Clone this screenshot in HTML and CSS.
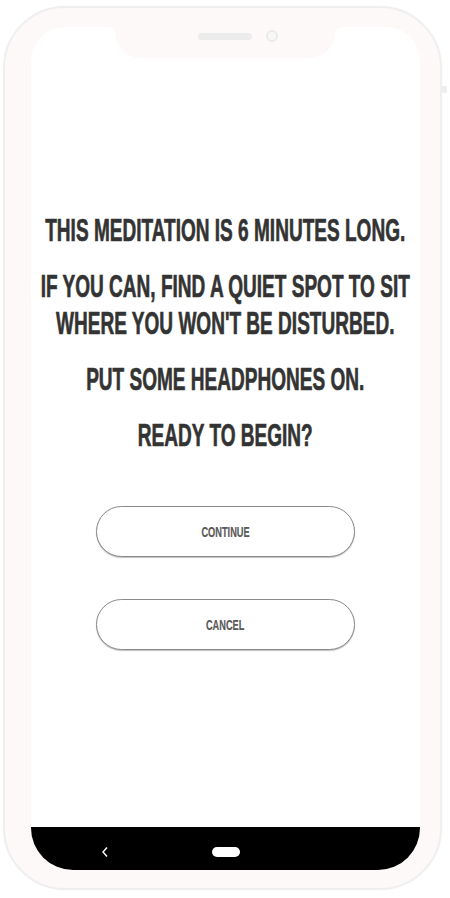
FILE: index.html
```html
<!DOCTYPE html>
<html lang="en">
<head>
<meta charset="utf-8">
<title>Meditation</title>
<link rel="stylesheet" href="styles.css">
</head>
<body>
<div class="phone">
  <span class="side-btn"></span>
  <div class="screen">
    <div class="notch">
      <span class="speaker"></span>
      <span class="camera"></span>
    </div>
    <main class="content">
      <div class="message">
        <p>This meditation is 6 minutes long.</p>
        <p>If you can, find a quiet spot to sit<br>where you won't be disturbed.</p>
        <p>Put some headphones on.</p>
        <p>Ready to begin?</p>
      </div>
      <div class="actions">
        <button class="btn"><span class="btn-label">Continue</span></button>
        <button class="btn"><span class="btn-label">Cancel</span></button>
      </div>
    </main>
    <nav class="navbar">
      <svg class="back" width="8" height="12" viewBox="0 0 8 12"><path d="M6 1.5 L2 6 L6 10.5" fill="none" stroke="#fff" stroke-width="1.4"/></svg>
      <span class="home"></span>
    </nav>
  </div>
</div>
</body>
</html>
```
FILE: styles.css
```css
* { box-sizing: border-box; }
html, body { margin: 0; padding: 0; background: #ffffff; }
body { width: 450px; height: 898px; overflow: hidden; }

.phone {
  position: relative;
  margin: 6px 0 0 3px;
  width: 439px;
  height: 884px;
  border: 2px solid #efefef;
  border-radius: 62px;
  background: #fdf9f8;
  padding: 19px 19px 18px 26px;
  box-shadow: 0 0 2px rgba(0,0,0,0.04);
}

.side-btn {
  position: absolute;
  right: -7px;
  top: 78px;
  width: 5px;
  height: 7px;
  background: #eeeeee;
}

.screen {
  position: relative;
  width: 389px;
  height: 843px;
  background: #ffffff;
  border-radius: 34px 34px 42px 42px;
  overflow: hidden;
  display: flex;
  flex-direction: column;
}

.notch {
  position: absolute;
  top: 0;
  left: 84px;
  width: 220px;
  height: 31px;
  background: #fdf9f8;
  border-radius: 0 0 26px 26px;
}
.notch::before,
.notch::after {
  content: "";
  position: absolute;
  top: 0;
  width: 6px;
  height: 6px;
}
.notch::before {
  left: -6px;
  background: radial-gradient(circle at 0 100%, transparent 5.5px, #fdf9f8 6px);
}
.notch::after {
  right: -6px;
  background: radial-gradient(circle at 100% 100%, transparent 5.5px, #fdf9f8 6px);
}
.speaker {
  position: absolute;
  left: 83px;
  top: 6px;
  width: 54px;
  height: 7px;
  border-radius: 4px;
  background: #ececec;
}
.camera {
  position: absolute;
  left: 151px;
  top: 3px;
  width: 12px;
  height: 12px;
  border-radius: 50%;
  border: 2px solid #ebebeb;
  background: #f7f7f7;
}

.content {
  flex: 1;
  display: flex;
  flex-direction: column;
  align-items: center;
  padding-top: 185px;
}

.message {
  width: max-content;
  text-align: center;
  white-space: nowrap;
  font-family: "Liberation Sans", Arial, sans-serif;
  font-weight: 700;
  font-size: 32px;
  line-height: 37px;
  color: #333333;
  -webkit-text-stroke: 0.7px #333333;
  text-transform: uppercase;
  transform: scaleX(0.595);
  transform-origin: center;
  display: flex;
  flex-direction: column;
  gap: 19px;
}
.message p { margin: 0; }

.actions {
  margin-top: 52px;
  display: flex;
  flex-direction: column;
  gap: 42px;
}

.btn {
  width: 259px;
  height: 51px;
  border: 1px solid #8a8a8a;
  border-radius: 26px;
  background: #ffffff;
  box-shadow: 0 1px 1px rgba(0,0,0,0.25);
  padding: 0;
  display: flex;
  align-items: center;
  justify-content: center;
  cursor: pointer;
}
.btn-label {
  display: inline-block;
  font-family: "Liberation Sans", Arial, sans-serif;
  font-weight: 700;
  font-size: 14px;
  color: #5a5a5a;
  -webkit-text-stroke: 0.2px #5a5a5a;
  text-transform: uppercase;
  transform: scaleX(0.66);
}

.navbar {
  height: 43px;
  background: #000000;
  position: relative;
  flex-shrink: 0;
}
.back {
  position: absolute;
  left: 70px;
  top: 19px;
}
.home {
  position: absolute;
  left: 181px;
  top: 20px;
  width: 28px;
  height: 10px;
  border-radius: 5px;
  background: #ffffff;
}
```
